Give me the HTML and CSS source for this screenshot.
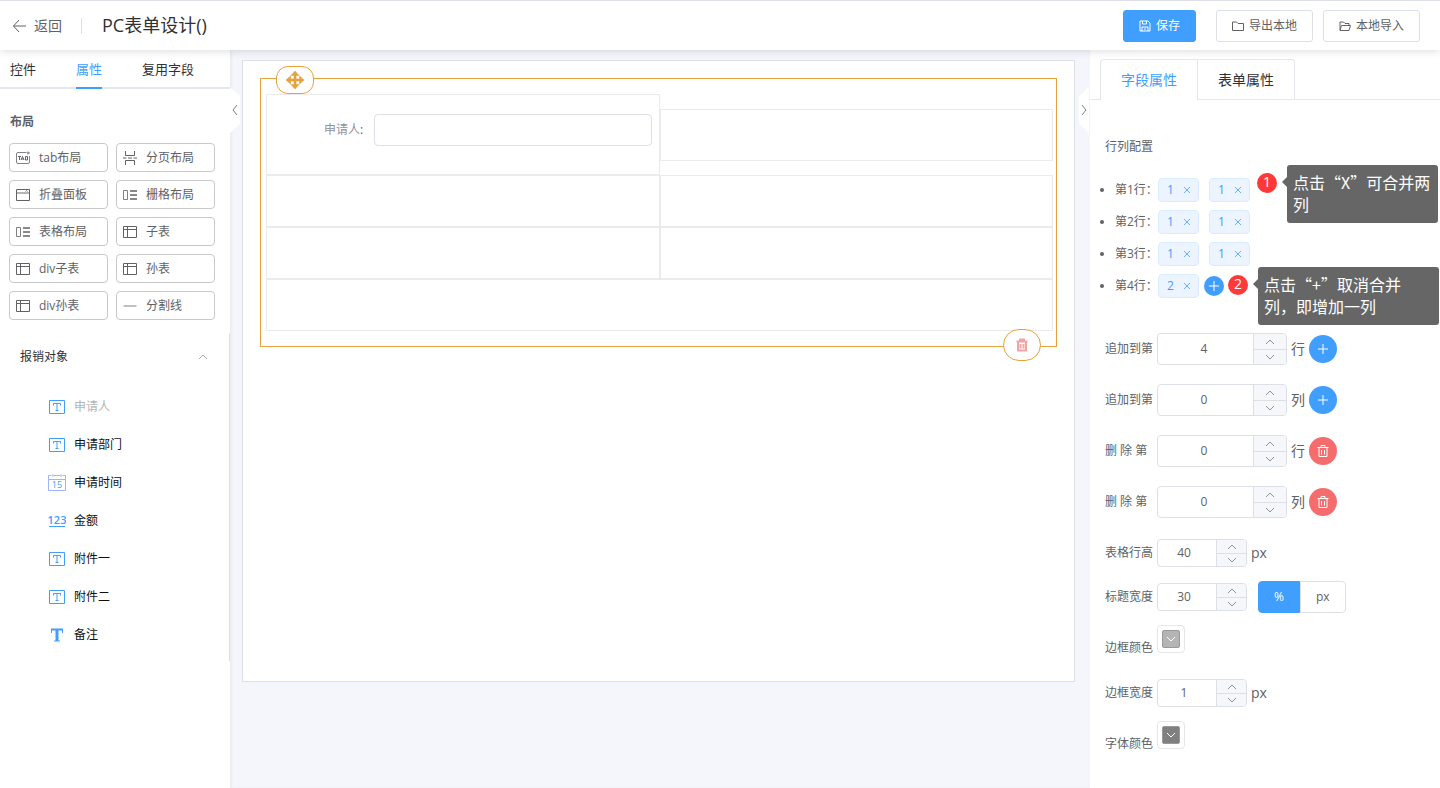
FILE: index.html
```html
<!DOCTYPE html>
<html lang="zh-CN">

<head>
    <meta charset="UTF-8">
    <meta name="viewport" content="width=device-width, initial-scale=1.0">
    <title>PC表单设计</title>
    <link rel="stylesheet" href="styles.css">
</head>

<body>
    <!-- Icons -->
    <svg class="sprite" aria-hidden="true">
        <symbol id="i-up" viewBox="0 0 12 12"><path d="M2 8l4-4 4 4" /></symbol>
        <symbol id="i-down" viewBox="0 0 12 12"><path d="M2 4l4 4 4-4" /></symbol>
        <symbol id="i-close" viewBox="0 0 12 12"><path d="M3 3l6 6M9 3l-6 6" stroke-width=".8" /></symbol>
        <symbol id="i-plus" viewBox="0 0 12 12"><path d="M6 1v10M1 6h10" /></symbol>
        <symbol id="i-trash" viewBox="0 0 14 14"><path d="M1.500 3.500h11M5 3.500v-2h4v2M3 3.500v9h8v-9M5.500 6v4.500M8.500 6v4.500" /></symbol>
        <symbol id="i-table" viewBox="0 0 14 14"><path d="M.5 1.500h13v11H.5zM.5 4.500h13M4.500 1.500v11" /></symbol>
        <symbol id="i-grid" viewBox="0 0 14 14"><path d="M.5 2.500h4v9h-4z" stroke-width=".8" /><path d="M7 3h7.500M7 7h7.500M7 11h7.500" stroke-width="1.600" /></symbol>
        <symbol id="i-text" viewBox="0 0 18 18"><path d="M1.500 2.500h15v13h-15zM5.500 7.500v-2h7v2M9 5.500v7M7.500 12.500h3" /></symbol>
    </svg>

    <!-- Header -->
    <header class="header">
        <a href="#" class="back">
            <svg width="16" height="14" viewBox="0 0 16 14"><path d="M7 1L1.500 7 7 13M1.500 7H14" /></svg>
            返回
        </a>
        <h1>PC表单设计()</h1>
        <div class="actions">
            <button type="button" class="btn btn-primary">
                <svg width="12" height="12" viewBox="0 0 12 12"><path d="M1 1h8l2 2v8H1zM3.500 1v3h4V1M3 11V7h6v4M5 9h2" /></svg>
                保存
            </button>
            <button type="button" class="btn">
                <svg width="12" height="12" viewBox="0 0 12 12"><path d="M.5 2h4l1.500 1.500h5.500V10.500H.5z" /></svg>
                导出本地
            </button>
            <button type="button" class="btn">
                <svg width="12" height="12" viewBox="0 0 12 12"><path d="M1 10V2h3.500L6 3.500h4V5M1 10.500L2.500 5.500h9L10 10.500z" /></svg>
                本地导入
            </button>
        </div>
    </header>

    <div class="main">
        <!-- Left sidebar -->
        <aside class="sidebar">
            <nav class="side-tabs">
                <a href="#">控件</a>
                <a href="#" class="active">属性</a>
                <a href="#">复用字段</a>
            </nav>
            <h2>布局</h2>
            <div class="layouts">
                <button type="button"><svg viewBox="0 0 14 14"><path d="M10.500 1.500H2q-1.500 0-1.500 1.500v8q0 1.500 1.500 1.500h10q1.500 0 1.500-1.500V5M12 .5v3M11 2h3" stroke-width=".8" /><path d="M2 5.500h3M3.500 5.500V9M5 9l1.500-3.500L8 9M5.500 8h2M9.500 5.500V9h2V5.500z" /></svg>tab布局</button>
                <button type="button"><svg viewBox="0 0 14 14"><path d="M2.500 0v4.500h9V0M2.500 14V9.500h9V14M0 7h3.500M5 7h4M10.500 7H14" /></svg>分页布局</button>
                <button type="button"><svg viewBox="0 0 14 14"><path d="M1 5h12" stroke="#b4b4b4" stroke-width="2" /><path d="M.5 1.500h13v11H.5zM9.500 3.500l1-1 1 1" /></svg>折叠面板</button>
                <button type="button"><svg><use href="#i-grid" /></svg>栅格布局</button>
                <button type="button"><svg><use href="#i-grid" /></svg>表格布局</button>
                <button type="button"><svg><use href="#i-table" /></svg>子表</button>
                <button type="button"><svg><use href="#i-table" /></svg>div子表</button>
                <button type="button"><svg><use href="#i-table" /></svg>孙表</button>
                <button type="button"><svg><use href="#i-table" /></svg>div孙表</button>
                <button type="button"><svg viewBox="0 0 14 14"><path d="M.5 7h13" stroke="#c0c0c0" stroke-width="2" /></svg>分割线</button>
            </div>
            <section class="group">
                <button type="button" class="group-title">报销对象 <svg><use href="#i-up" /></svg></button>
                <ul class="field-list">
                    <li class="used"><svg><use href="#i-text" /></svg>申请人</li>
                    <li><svg><use href="#i-text" /></svg>申请部门</li>
                    <li>
                        <svg viewBox="0 0 18 18"><path d="M3.500 1.500h-3v15h17v-15h-3M6 1.500h6M.5 5.500h17M5 0v3M13 0v3" stroke="#9db4ff" /><text x="9" y="14" font-size="9">15</text></svg>申请时间
                    </li>
                    <li><svg viewBox="0 0 18 18"><text x="9" y="12" font-size="11" class="bold">123</text><path d="M1 14.500h16" /></svg>金额</li>
                    <li><svg><use href="#i-text" /></svg>附件一</li>
                    <li><svg><use href="#i-text" /></svg>附件二</li>
                    <li><svg viewBox="0 0 18 18"><path d="M3.500 7V3.500h11V7M6 15h6" /><path d="M9 3v12" stroke-width="3" /><path d="M3 3.500h12" stroke-width="2" /></svg>备注</li>
                </ul>
            </section>
        </aside>

        <!-- Canvas -->
        <main class="stage">
            <button type="button" class="fold fold-left" aria-label="收起左侧"><svg viewBox="0 0 8 12"><path d="M6 1L2 6l4 5" /></svg></button>
            <button type="button" class="fold fold-right" aria-label="收起右侧"><svg viewBox="0 0 8 12"><path d="M2 1l4 5-4 5" /></svg></button>
            <div class="canvas">
                <div class="widget">
                    <button type="button" class="handle move" aria-label="移动">
                        <svg width="18" height="18" viewBox="0 0 18 18"><path d="M9 0l4 4.500h-3V8h3.500V5L18 9l-4.500 4v-3H10v3.500h3L9 18l-4-4.500h3V10H4.500v3L0 9l4.500-4v3H8V4.500H5z" /></svg>
                    </button>
                    <div class="row">
                        <div class="cell cell-field">
                            <label for="applicant"><span>申请人</span>:</label>
                            <input type="text" id="applicant">
                        </div>
                        <div class="cell"></div>
                    </div>
                    <div class="row">
                        <div class="cell"></div>
                        <div class="cell"></div>
                    </div>
                    <div class="row">
                        <div class="cell"></div>
                        <div class="cell"></div>
                    </div>
                    <div class="row">
                        <div class="cell"></div>
                    </div>
                    <button type="button" class="handle remove" aria-label="删除">
                        <svg width="14" height="14"><use href="#i-trash" /></svg>
                    </button>
                </div>
            </div>
        </main>

        <!-- Right panel -->
        <aside class="panel">
            <nav class="card-tabs">
                <a href="#" class="active">字段属性</a>
                <a href="#">表单属性</a>
            </nav>
            <h3>行列配置</h3>
            <ul class="row-list">
                <li>
                    <span class="row-name">第1行：</span>
                    <span class="tag">1<button type="button" aria-label="合并"><svg><use href="#i-close" /></svg></button></span>
                    <span class="tag">1<button type="button" aria-label="合并"><svg><use href="#i-close" /></svg></button></span>
                    <div class="hint hint-merge"><b>1</b><p>点击“X”可合并两列</p></div>
                </li>
                <li>
                    <span class="row-name">第2行：</span>
                    <span class="tag">1<button type="button" aria-label="合并"><svg><use href="#i-close" /></svg></button></span>
                    <span class="tag">1<button type="button" aria-label="合并"><svg><use href="#i-close" /></svg></button></span>
                </li>
                <li>
                    <span class="row-name">第3行：</span>
                    <span class="tag">1<button type="button" aria-label="合并"><svg><use href="#i-close" /></svg></button></span>
                    <span class="tag">1<button type="button" aria-label="合并"><svg><use href="#i-close" /></svg></button></span>
                </li>
                <li>
                    <span class="row-name">第4行：</span>
                    <span class="tag">2<button type="button" aria-label="合并"><svg><use href="#i-close" /></svg></button></span>
                    <button type="button" class="round round-sm" aria-label="增加一列"><svg><use href="#i-plus" /></svg></button>
                    <div class="hint hint-split"><b>2</b><p>点击“+”取消合并列，即增加一列</p></div>
                </li>
            </ul>

            <div class="fields">
                <div class="field">
                    <label for="add-row">追加到第</label>
                    <div class="stepper">
                        <input type="text" id="add-row" value="4">
                        <button type="button" aria-label="加"><svg><use href="#i-up" /></svg></button>
                        <button type="button" aria-label="减"><svg><use href="#i-down" /></svg></button>
                    </div>
                    <span class="unit">行</span>
                    <button type="button" class="round" aria-label="追加行"><svg><use href="#i-plus" /></svg></button>
                </div>
                <div class="field">
                    <label for="add-col">追加到第</label>
                    <div class="stepper">
                        <input type="text" id="add-col" value="0">
                        <button type="button" aria-label="加"><svg><use href="#i-up" /></svg></button>
                        <button type="button" aria-label="减"><svg><use href="#i-down" /></svg></button>
                    </div>
                    <span class="unit">列</span>
                    <button type="button" class="round" aria-label="追加列"><svg><use href="#i-plus" /></svg></button>
                </div>
                <div class="field">
                    <label for="del-row">删 除 第</label>
                    <div class="stepper">
                        <input type="text" id="del-row" value="0">
                        <button type="button" aria-label="加"><svg><use href="#i-up" /></svg></button>
                        <button type="button" aria-label="减"><svg><use href="#i-down" /></svg></button>
                    </div>
                    <span class="unit">行</span>
                    <button type="button" class="round danger" aria-label="删除行"><svg><use href="#i-trash" /></svg></button>
                </div>
                <div class="field">
                    <label for="del-col">删 除 第</label>
                    <div class="stepper">
                        <input type="text" id="del-col" value="0">
                        <button type="button" aria-label="加"><svg><use href="#i-up" /></svg></button>
                        <button type="button" aria-label="减"><svg><use href="#i-down" /></svg></button>
                    </div>
                    <span class="unit">列</span>
                    <button type="button" class="round danger" aria-label="删除列"><svg><use href="#i-trash" /></svg></button>
                </div>
            </div>

            <div class="fields-sm">
                <div class="field">
                    <label for="row-height">表格行高</label>
                    <div class="stepper">
                        <input type="text" id="row-height" value="40">
                        <button type="button" aria-label="加"><svg><use href="#i-up" /></svg></button>
                        <button type="button" aria-label="减"><svg><use href="#i-down" /></svg></button>
                    </div>
                    <span class="unit">px</span>
                </div>
                <div class="field">
                    <label for="title-width">标题宽度</label>
                    <div class="stepper">
                        <input type="text" id="title-width" value="30">
                        <button type="button" aria-label="加"><svg><use href="#i-up" /></svg></button>
                        <button type="button" aria-label="减"><svg><use href="#i-down" /></svg></button>
                    </div>
                    <div class="radios">
                        <input type="radio" name="unit" id="unit-percent" checked><label for="unit-percent">%</label>
                        <input type="radio" name="unit" id="unit-px"><label for="unit-px">px</label>
                    </div>
                </div>
                <div class="field field-color">
                    <label for="border-color">边框颜色</label>
                    <button type="button" id="border-color" class="color"><svg><use href="#i-down" /></svg></button>
                </div>
                <div class="field">
                    <label for="border-width">边框宽度</label>
                    <div class="stepper">
                        <input type="text" id="border-width" value="1">
                        <button type="button" aria-label="加"><svg><use href="#i-up" /></svg></button>
                        <button type="button" aria-label="减"><svg><use href="#i-down" /></svg></button>
                    </div>
                    <span class="unit">px</span>
                </div>
                <div class="field field-color">
                    <label for="font-color">字体颜色</label>
                    <button type="button" id="font-color" class="color color-dark"><svg><use href="#i-down" /></svg></button>
                </div>
            </div>
        </aside>
    </div>
</body>

</html>
```
FILE: styles.css
```css
* {
    box-sizing: border-box;
}

body {
    margin: 0;
    min-height: 100vh;
    display: flex;
    flex-direction: column;
    font-family: "Open Sans", "Noto Sans CJK SC", sans-serif;
    font-size: 12px;
    line-height: 16px;
    color: #606266;
    background: #fff;
}

h1, h2, h3, p, ul {
    margin: 0;
    padding: 0;
    font-weight: normal;
    list-style: none;
}

a {
    color: #303133;
    text-decoration: none;
}

button, input {
    margin: 0;
    padding: 0;
    font: inherit;
    color: inherit;
    background: none;
    border: none;
}

button {
    cursor: pointer;
}

svg {
    flex: none;
    width: 12px;
    height: 12px;
    fill: none;
    stroke: currentColor;
}

.sprite {
    display: none;
}

/* header */
.header {
    position: relative;
    z-index: 2;
    display: flex;
    align-items: center;
    height: 50px;
    padding: 0 20px 0 12px;
    background: #fff;
    border-top: 1px solid #dcdfe6;
    box-shadow: 0 1px 8px rgba(0, 0, 0, 0.14);
}

.back {
    display: flex;
    align-items: center;
    gap: 6px;
    padding-right: 19px;
    font-size: 14px;
    color: #606266;
    border-right: 1px solid #dcdfe6;
}

.back svg {
    width: 16px;
    height: 14px;
}

.header h1 {
    padding: 0 0 2px 20px;
    font-size: 18px;
    line-height: 24px;
    color: #303133;
}

.actions {
    display: flex;
    gap: 10px;
    margin-left: auto;
}

.btn {
    display: flex;
    align-items: center;
    gap: 5px;
    height: 32px;
    padding: 0 15px;
    border: 1px solid #dcdfe6;
    border-radius: 3px;
}

.btn-primary {
    margin-right: 10px;
    color: #fff;
    background: #409eff;
    border-color: #409eff;
}

.main {
    flex: 1;
    display: flex;
}

/* left sidebar */
.sidebar {
    flex: none;
    width: 230px;
    background: #fff;
}

.side-tabs {
    display: flex;
    gap: 40px;
    height: 39px;
    padding: 0 10px;
    font-size: 13px;
    line-height: 38px;
    border-bottom: 2px solid #e4e7ed;
}

.side-tabs a {
    height: 39px;
}

.side-tabs .active {
    color: #409eff;
    border-bottom: 2px solid #409eff;
}

.sidebar h2 {
    padding: 25px 10px 13px;
    font-size: 12px;
    font-weight: bold;
}

.layouts {
    display: grid;
    grid-template-columns: 1fr 1fr;
    gap: 8px;
    padding: 0 15px 0 9px;
}

.layouts button {
    display: flex;
    align-items: center;
    gap: 9px;
    height: 29px;
    padding: 0 6px;
    border: 1px solid #c8c9cc;
    border-radius: 4px;
}

.layouts svg {
    width: 14px;
    height: 14px;
}

.group {
    margin-top: 13px;
    border-right: 1px solid #dcdfe6;
}

.group-title {
    display: flex;
    align-items: center;
    justify-content: space-between;
    width: 100%;
    height: 47px;
    padding: 0 20px;
    color: #303133;
}

.group-title svg {
    color: #a8abb2;
}

.field-list {
    padding: 8px 0 7px 48px;
}

.field-list li {
    display: flex;
    align-items: center;
    gap: 8px;
    height: 38px;
    color: #111;
}

.field-list .used {
    color: #b4b4b4;
}

.field-list svg {
    width: 18px;
    height: 18px;
    color: #409eff;
}

.field-list text {
    fill: currentColor;
    stroke: none;
    text-anchor: middle;
}

.field-list .bold {
    font-weight: 600;
}

/* canvas */
.stage {
    position: relative;
    flex: 1;
    min-width: 0;
    padding: 10px 15px 106px 12px;
    background: #f4f6fb;
    box-shadow: inset 2px 0 2px #ebedf1;
}

.fold {
    position: absolute;
    top: 37px;
    display: flex;
    align-items: center;
    justify-content: center;
    width: 10px;
    height: 46px;
    color: #7a7d83;
    background: #fff;
}

.fold svg {
    width: 8px;
}

.fold-left {
    left: 0;
    clip-path: polygon(0 0, 100% 20%, 100% 80%, 0 100%);
}

.fold-right {
    right: 1px;
    clip-path: polygon(100% 0, 0 20%, 0 80%, 100% 100%);
}

.canvas {
    height: 100%;
    padding: 17px;
    background: #fff;
    border: 1px solid #dcdfe6;
}

.widget {
    position: relative;
    padding: 15px 3px 15px 5px;
    border: 1px solid #e6a23c;
}

.handle {
    position: absolute;
    display: flex;
    align-items: center;
    justify-content: center;
    width: 38px;
    background: #fff;
    border: 1px solid #e6a23c;
}

.move {
    top: -13px;
    left: 15px;
    height: 28px;
    border-radius: 12px;
}

.move svg {
    width: 18px;
    height: 18px;
    fill: #e6a23c;
    stroke: #e6a23c;
    stroke-width: 0.6px;
}

.remove {
    right: 15px;
    bottom: -15px;
    height: 32px;
    color: #f3a3a3;
    border-radius: 16px;
}

.remove svg {
    width: 14px;
    height: 14px;
    stroke-width: 2;
}

.row {
    display: flex;
    align-items: center;
}

.cell {
    width: 50%;
    height: 52px;
    border: 1px solid #ebebeb;
}

.cell:only-child {
    width: 100%;
}

.cell-field {
    display: flex;
    align-items: center;
    gap: 11px;
    height: 81px;
    padding-right: 7px;
    padding-bottom: 9px;
}

.cell-field label {
    width: 25%;
    text-align: right;
}

.cell-field span {
    color: #909399;
}

.cell-field input {
    flex: 1;
    min-width: 0;
    height: 32px;
    padding: 0 15px;
    border: 1px solid #dcdfe6;
    border-radius: 4px;
}

/* right panel */
.panel {
    flex: none;
    width: 350px;
    padding-top: 9px;
    background: #fff;
}

.card-tabs {
    display: flex;
    height: 41px;
    padding-left: 10px;
    font-size: 14px;
    line-height: 40px;
    border-bottom: 1px solid #e4e7ed;
}

.card-tabs a {
    height: 40px;
    padding: 0 20px;
    border: 1px solid #e4e7ed;
    border-width: 1px 1px 0 0;
    border-radius: 0 4px 0 0;
}

.card-tabs .active {
    height: 41px;
    color: #409eff;
    background: #fff;
    border-left-width: 1px;
    border-radius: 4px 0 0 0;
}

.panel h3 {
    padding: 39px 15px 19px;
    font-size: 12px;
}

.row-list {
    padding-left: 10px;
}

.row-list li {
    position: relative;
    display: flex;
    align-items: center;
    height: 32px;
}

.row-list li::before {
    content: "";
    width: 4px;
    height: 4px;
    margin-right: 11px;
    background: #606266;
    border-radius: 50%;
}

.row-name {
    width: 43px;
    white-space: nowrap;
}

.tag {
    display: flex;
    align-items: center;
    justify-content: space-between;
    width: 41px;
    height: 24px;
    padding: 0 5px 0 8px;
    color: #409eff;
    background: #ecf5ff;
    border: 1px solid #d9ecff;
    border-radius: 4px;
}

.tag + .tag {
    margin-left: 10px;
}

.tag button {
    display: flex;
}

.round {
    display: flex;
    align-items: center;
    justify-content: center;
    width: 28px;
    height: 28px;
    color: #fff;
    background: #409eff;
    border-radius: 50%;
}

.round-sm {
    width: 20px;
    height: 20px;
    margin-left: 5px;
}

.danger {
    background: #f56c6c;
}

.danger svg {
    width: 14px;
    height: 14px;
}

.hint {
    position: absolute;
    display: flex;
    align-items: flex-start;
    gap: 10px;
    font-size: 16px;
    line-height: 22px;
    color: #fff;
}

.hint-merge {
    top: -9px;
    left: 157px;
    width: 181px;
}

.hint-split {
    top: -3px;
    left: 128px;
    width: 211px;
}

.hint b {
    flex: none;
    width: 20px;
    height: 20px;
    margin-top: 8px;
    font-size: 14px;
    font-weight: normal;
    line-height: 18px;
    text-align: center;
    background: #ff3838;
    border-radius: 50%;
}

.hint p {
    position: relative;
    flex: 1;
    padding: 6px 6px 8px;
    font-family: "Noto Sans CJK SC", sans-serif;
    background: #666;
    border-radius: 3px;
}

.hint-split p {
    padding-right: 24px;
}

.hint p::before {
    content: "";
    position: absolute;
    top: 12px;
    left: -5px;
    border: 5px solid transparent;
    border-right-color: #666;
    border-left: none;
}

.fields {
    display: flex;
    flex-direction: column;
    gap: 19px;
    padding: 31px 15px 13px;
}

.field {
    display: flex;
    align-items: center;
    gap: 4px;
}

.field > label {
    width: 48px;
    white-space: nowrap;
}

.stepper {
    display: grid;
    grid-template-columns: 1fr 33px;
    grid-template-rows: 1fr 1fr;
    width: 130px;
    height: 32px;
    overflow: hidden;
    border: 1px solid #dcdfe6;
    border-radius: 4px;
}

.stepper input {
    grid-row: 1 / 3;
    min-width: 0;
    padding-right: 3px;
    text-align: center;
}

.stepper button {
    display: flex;
    align-items: center;
    justify-content: center;
    color: #909399;
    background: #f5f7fa;
    border-left: 1px solid #dcdfe6;
}

.stepper button:last-child {
    border-top: 1px solid #dcdfe6;
}

.unit {
    font-size: 14px;
}

.fields-sm {
    padding: 0 15px;
}

.fields-sm .field {
    height: 44px;
}

.fields-sm .stepper {
    grid-template-columns: 1fr 30px;
    width: 90px;
    height: 28px;
}

.fields-sm .stepper input {
    padding-right: 6px;
}

.radios {
    display: flex;
    margin-left: 7px;
}

.radios input {
    position: absolute;
    opacity: 0;
}

.radios label {
    height: 32px;
    padding: 0 15px;
    line-height: 30px;
    border: 1px solid #dcdfe6;
    border-radius: 0 4px 4px 0;
    cursor: pointer;
}

.radios label:first-of-type {
    border-radius: 4px 0 0 4px;
}

.radios input:checked + label {
    color: #fff;
    background: #409eff;
    border-color: #409eff;
}

.fields-sm .field-color {
    align-items: flex-start;
    height: 52px;
    padding-top: 6px;
}

.field-color label {
    padding-top: 15px;
}

.color {
    display: flex;
    align-items: center;
    justify-content: center;
    width: 28px;
    height: 28px;
    border: 1px solid #e6e6e6;
    border-radius: 4px;
}

.color svg {
    width: 18px;
    height: 18px;
    padding: 2px;
    color: #fff;
    background: #b4b4b4;
    border: 1px solid #999;
    border-radius: 2px;
}

.color-dark svg {
    background: #808080;
}
```
